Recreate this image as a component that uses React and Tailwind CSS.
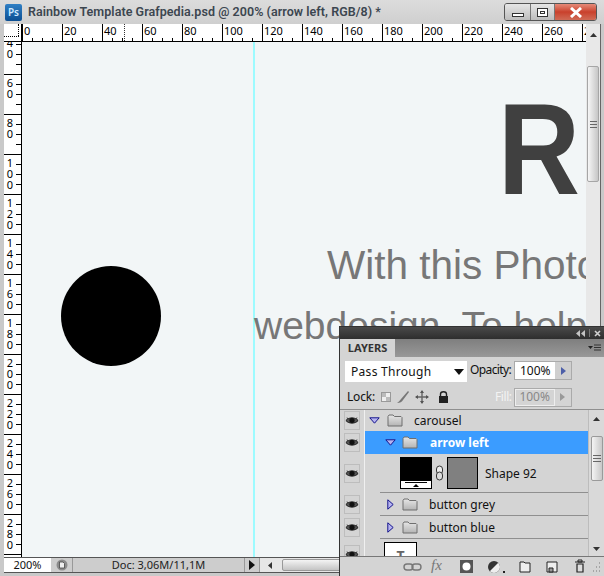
const UI = '"Noto Sans", "DejaVu Sans", sans-serif';

const TOP_MARKS = [0, 20, 40, 60, 80, 100, 120, 140, 160, 180, 200, 220, 240, 260, 280];
const SIDE_MARKS = [40, 60, 80, 100, 120, 140, 160, 180, 200, 220, 240, 260, 280, 300];

function Eye() {
  return (
    <svg width="16" height="11" viewBox="0 0 16 11">
      <path d="M1 5.5C4 1.5 12 1.5 15 5.5C12 9.5 4 9.5 1 5.5Z" fill="#555" stroke="#111" strokeWidth="1" />
      <circle cx="8" cy="5.3" r="3" fill="#111" />
      <path d="M2 2.5L4 3.5M14 2.5L12 3.5" stroke="#222" strokeWidth="1" />
    </svg>
  );
}

function Folder() {
  return (
    <svg width="16" height="13" viewBox="0 0 16 13">
      <defs>
        <linearGradient id="folderFill" x1="0" y1="0" x2="0" y2="1">
          <stop offset="0" stopColor="#e6e6e6" />
          <stop offset="1" stopColor="#b4b4b4" />
        </linearGradient>
      </defs>
      <path d="M1 12V2.5L2 1H6L7.5 2.5H14L15 3.5V12H1Z" fill="url(#folderFill)" stroke="#6f6f6f" strokeWidth="1" />
    </svg>
  );
}

function Twisty({ open }) {
  return open ? (
    <svg width="11" height="7" viewBox="0 0 11 7">
      <path d="M.8.8H10.2L5.5 6.2Z" fill="#b7b4f0" stroke="#14148c" strokeWidth="1" />
    </svg>
  ) : (
    <svg width="7" height="11" viewBox="0 0 7 11">
      <path d="M.8.8V10.2L6.2 5.5Z" fill="#b7b4f0" stroke="#14148c" strokeWidth="1" />
    </svg>
  );
}

function EyeCell({ height }) {
  return (
    <div className="flex w-[25px] shrink-0 items-center justify-center border-r border-[#f0f0f0] bg-[#d4d4d4]" style={{ height }}>
      <div className="flex h-[19px] w-[16px] items-center justify-center border border-[#bdbdbd]">
        <Eye />
      </div>
    </div>
  );
}

function Ruler() {
  return (
    <div className="flex h-[18px] shrink-0 border-b border-black bg-white">
      <div className="relative w-[18px] shrink-0 border-r border-black">
        <div className="absolute left-0 top-[12px] w-[15px] border-t border-dotted border-black" />
        <div className="absolute left-[14px] top-0 h-[12px] border-l border-dotted border-black" />
      </div>
      <div className="relative flex flex-1 overflow-hidden">
        {TOP_MARKS.map((mark) => (
          <div key={mark} className="flex h-full w-[40px] shrink-0 flex-col justify-between border-l border-black">
            <span className="pl-[1px] text-[11px] leading-[13px] text-black">{mark}</span>
            <div className="flex h-[3px] items-end">
              <span className="h-[3px] w-[10px] border-r border-black" />
              <span className="h-[3px] w-[10px] border-r border-black" />
              <span className="h-[3px] w-[10px] border-r border-black" />
            </div>
          </div>
        ))}
        <div className="absolute left-[102px] top-0 h-full border-l border-dotted border-[#333]" />
      </div>
    </div>
  );
}

function SideRuler() {
  return (
    <div className="w-[18px] shrink-0 overflow-hidden border-r border-black bg-white">
      <div className="-mt-[8px]">
        {SIDE_MARKS.map((mark) => (
          <div key={mark} className="flex h-[40px] border-t border-black">
            <div className="flex w-[12px] flex-col items-center pt-[2px] text-[11px] leading-[11px] text-black">
              {String(mark).split('').map((digit, i) => (
                <span key={i}>{digit}</span>
              ))}
            </div>
            <div className="flex w-[5px] flex-col">
              <span className="h-[10px] border-b border-black" />
              <span className="h-[10px] border-b border-black" />
              <span className="h-[10px] border-b border-black" />
            </div>
          </div>
        ))}
      </div>
    </div>
  );
}

function LayerRow({ height, indent, open, name, line = true }) {
  return (
    <div className="flex">
      <EyeCell height={height} />
      <div className="flex flex-1 items-center" style={{ height }}>
        <div className={`flex h-full flex-1 items-center ${line ? 'border-b border-[#8f8f8f]' : ''}`} style={{ marginLeft: indent.line, paddingLeft: indent.pad }}>
          <span className="flex w-[12px] justify-center">
            <Twisty open={open} />
          </span>
          <span className="ml-[6px]">
            <Folder />
          </span>
          <span className="ml-[11px] pt-[2px] text-[12px] text-[#111]">{name}</span>
        </div>
      </div>
    </div>
  );
}

function LayersPanel() {
  return (
    <div
      className="absolute bottom-0 left-[339px] top-[326px] flex w-[265px] flex-col overflow-hidden border-l border-t border-[#333] bg-[#d4d4d4]"
      style={{ fontFamily: UI }}
    >
      <div className="flex h-[12px] shrink-0 items-center justify-end gap-[4px] bg-gradient-to-b from-[#4a4a4a] to-[#2e2e2e] pr-[3px] text-[#bbb]">
        <svg width="9" height="7" viewBox="0 0 9 7">
          <path d="M4 0V7L0 3.5ZM9 0V7L5 3.5Z" fill="#c4c4c4" />
        </svg>
        <span className="h-[8px] border-l border-[#777]" />
        <svg width="7" height="7" viewBox="0 0 7 7">
          <path d="M1 1L6 6M6 1L1 6" stroke="#d0d0d0" strokeWidth="1.6" />
        </svg>
      </div>

      <div className="flex h-[18px] shrink-0 items-center justify-between bg-gradient-to-b from-[#7f7f7f] to-[#989898] pr-[3px]">
        <div className="flex h-full w-[55px] items-center justify-center bg-[#d4d4d4] text-[11px] font-bold text-[#333]">LAYERS</div>
        <svg width="13" height="8" viewBox="0 0 13 8">
          <path d="M0 2H5L2.5 5Z" fill="#222" />
          <path d="M6 1H13M6 3.5H13M6 6H13" stroke="#333" strokeWidth="1" />
        </svg>
      </div>

      <div className="flex h-[28px] shrink-0 items-start pl-[5px] pt-[4px]">
        <div className="flex h-[21px] w-[122px] items-center justify-between bg-white pl-[6px] pr-[3px] text-[12px] tracking-[0.3px] text-[#111]">
          Pass Through
          <svg width="10" height="6" viewBox="0 0 10 6">
            <path d="M0 0H10L5 6Z" fill="#111" />
          </svg>
        </div>
        <span className="ml-[3px] text-[12px] leading-[18px] tracking-[-0.6px] text-[#111]">Opacity:</span>
        <div className="ml-[3px] flex h-[19px] w-[58px] border border-[#aaa]">
          <span className="flex w-[40px] items-center justify-center bg-white text-[12px] text-[#111]">100%</span>
          <span className="flex flex-1 items-center justify-center bg-[#cfcfcf]">
            <svg width="5" height="8" viewBox="0 0 5 8">
              <path d="M0 0L5 4L0 8Z" fill="#4c5ea8" />
            </svg>
          </span>
        </div>
      </div>

      <div className="flex h-[25px] shrink-0 items-center border-b border-[#8f8f8f] pl-[7px]">
        <span className="text-[12px] tracking-[-0.2px] text-[#111]">Lock:</span>
        <svg className="ml-[6px]" width="90" height="14" viewBox="0 0 90 14">
          <rect x=".5" y="2.5" width="9" height="9" fill="#eee" stroke="#999" />
          <path d="M1 3H5V7H1ZM5 7H9V11H5Z" fill="#bbb" />
          <path d="M16 13C18 12 19 10 20 9L27 1L28 2L22 10C21 12 19 13 16 13Z" fill="#777" />
          <path d="M41 1V13M35 7H47" stroke="#666" strokeWidth="1.4" />
          <path d="M41 0L43 3H39ZM41 14L39 11H43ZM34 7L37 5V9ZM48 7L45 5V9Z" fill="#555" />
          <rect x="58" y="6" width="9" height="7" fill="#222" />
          <path d="M59.5 6V4C59.5 1 65.5 1 65.5 4V6" fill="none" stroke="#222" strokeWidth="1.4" />
        </svg>
        <span className="ml-[24px] text-[12px] tracking-[-0.4px] text-[#f3f3f3]">Fill:</span>
        <div className="ml-[2px] flex h-[19px] w-[58px] border border-[#aaa]">
          <span className="flex w-[40px] items-center justify-center border border-[#eee] text-[12px] text-[#888]">100%</span>
          <span className="flex flex-1 items-center justify-center">
            <svg width="5" height="8" viewBox="0 0 5 8">
              <path d="M0 0L5 4L0 8Z" fill="#999" />
            </svg>
          </span>
        </div>
      </div>

      <div className="flex min-h-0 flex-1">
        <div className="min-w-0 flex-1 overflow-hidden">
          <div className="flex">
            <EyeCell height={21} />
            <div className="flex h-[21px] flex-1 items-center pl-[3px]">
              <span className="flex w-[12px] justify-center">
                <Twisty open />
              </span>
              <span className="ml-[7px]">
                <Folder />
              </span>
              <span className="ml-[11px] text-[12px] text-[#111]">carousel</span>
            </div>
          </div>

          <div className="flex">
            <EyeCell height={23} />
            <div className="flex h-[23px] flex-1 items-center bg-[#3b9cff] pl-[19px]">
              <span className="flex w-[12px] justify-center">
                <Twisty open />
              </span>
              <span className="ml-[6px]">
                <Folder />
              </span>
              <span className="ml-[12px] text-[12px] font-bold text-white">arrow left</span>
            </div>
          </div>

          <div className="flex">
            <EyeCell height={39} />
            <div className="flex h-[39px] flex-1 items-center pl-[15px]">
              <div className="flex h-full flex-1 items-center border-b border-[#8f8f8f] pl-[20px]">
                <div className="flex h-[32px] w-[32px] flex-col border border-black bg-black">
                  <div className="flex-1" />
                  <div className="flex h-[7px] flex-col items-center bg-white">
                    <span className="mt-[1px] w-[22px] border-t border-black" />
                    <span className="mt-[1px] h-0 w-0 border-x-[3px] border-b-[3px] border-x-transparent border-b-black" />
                  </div>
                </div>
                <svg className="mx-[3px]" width="9" height="16" viewBox="0 0 9 16">
                  <rect x="1.5" y="1" width="6" height="8" rx="3" fill="#eee" stroke="#333" />
                  <rect x="1.5" y="7" width="6" height="8" rx="3" fill="#ddd" stroke="#333" />
                </svg>
                <div className="h-[32px] w-[31px] border border-black bg-[#808080]" />
                <span className="ml-[7px] pt-[2px] text-[12px] text-[#111]">Shape 92</span>
              </div>
            </div>
          </div>

          <LayerRow height={23} indent={{ line: 15, pad: 4 }} name="button grey" />
          <LayerRow height={23} indent={{ line: 15, pad: 4 }} name="button blue" />

          <div className="flex">
            <EyeCell height={31} />
            <div className="h-[31px] flex-1 pl-[19px] pt-[3px]">
              <div className="flex h-[30px] w-[33px] justify-center border border-black bg-white pt-[6px] text-[14px] font-bold leading-none text-[#666]">T</div>
            </div>
          </div>
        </div>

        <div className="flex w-[16px] shrink-0 flex-col items-center border-l border-[#bcbcbc] bg-[#d9d9d9]">
          <svg className="mt-[7px]" width="7" height="4" viewBox="0 0 7 4">
            <path d="M3.5 0L7 4H0Z" fill="#333" />
          </svg>
          <div className="mt-[15px] flex h-[45px] w-[12px] flex-col items-center justify-center gap-[2px] rounded-[2px] border border-[#9a9a9a] bg-gradient-to-r from-[#f4f4f4] to-[#c8c8c8]">
            <span className="w-[8px] border-t border-[#666]" />
            <span className="w-[8px] border-t border-[#666]" />
            <span className="w-[8px] border-t border-[#666]" />
          </div>
          <svg className="mt-auto mb-[5px]" width="7" height="4" viewBox="0 0 7 4">
            <path d="M0 0H7L3.5 4Z" fill="#333" />
          </svg>
        </div>
      </div>

      <div className="flex h-[20px] shrink-0 items-center border-t border-[#777] bg-[#d4d4d4] pl-[63px]">
        <svg width="200" height="16" viewBox="0 0 200 16">
          <rect x="1" y="5" width="9" height="6" rx="3" fill="none" stroke="#777" strokeWidth="1.4" />
          <rect x="9" y="5" width="9" height="6" rx="3" fill="none" stroke="#777" strokeWidth="1.4" />
          <rect x="57" y="1" width="13" height="13" fill="#555" />
          <circle cx="63.5" cy="7.5" r="4" fill="#fff" />
          <circle cx="91" cy="8" r="6" fill="#333" />
          <path d="M91 2A6 6 0 0 1 91 14Z" fill="#eee" transform="rotate(45 91 8)" />
          <rect x="100" y="12" width="2" height="2" fill="#222" />
          <path d="M117 3H121L122 4H127V13H117Z" fill="#eee" stroke="#222" />
          <path d="M144 3H154V13H144Z" fill="#eee" stroke="#222" />
          <path d="M146 9H150V13H146Z" fill="#999" stroke="#222" />
          <path d="M172 3H182M174 5V13H180V5Z" fill="#ddd" stroke="#222" strokeWidth="1.2" />
          <path d="M175 1H179V3H175Z" fill="none" stroke="#222" />
          <path d="M196 4H197M193 8H194M196 8H197M190 12H191M193 12H194M196 12H197" stroke="#777" />
        </svg>
        <span className="absolute left-[91px] bottom-[2px] text-[15px] italic leading-[18px] text-[#777]" style={{ fontFamily: '"Liberation Serif", serif' }}>
          fx
        </span>
      </div>
    </div>
  );
}

export default function App() {
  return (
    <div className="relative flex h-[576px] w-[604px] flex-col overflow-hidden bg-[#c9c9c9]" style={{ fontFamily: UI }}>
      <div className="flex h-[24px] shrink-0 items-center bg-gradient-to-b from-[#dcdcdc] to-[#cfcfcf] pl-[5px] pr-[7px]">
        <div className="flex h-[17px] w-[17px] items-center justify-center rounded-[2px] bg-gradient-to-b from-[#2f7fc4] to-[#0b4f93] text-[10px] font-semibold leading-none text-[#cfe8ff]">
          Ps
        </div>
        <span className="ml-[6px] text-[12.5px] font-semibold tracking-[0.05px] text-[#3c4650]" style={{ fontFamily: 'Roboto, "Noto Sans", sans-serif' }}>
          Rainbow Template Grafpedia.psd @ 200% (arrow left, RGB/8) *
        </span>
        <div className="ml-auto flex h-[18px] w-[93px] overflow-hidden rounded-[3px] border border-[#555]">
          <div className="flex w-[25px] items-end justify-center bg-gradient-to-b from-[#e6e6e6] to-[#bdbdbd] pb-[3px]">
            <span className="h-[4px] w-[12px] border border-[#333] bg-white" />
          </div>
          <div className="flex w-[25px] items-center justify-center border-x border-[#777] bg-gradient-to-b from-[#e6e6e6] to-[#bdbdbd]">
            <span className="flex h-[9px] w-[11px] items-center justify-center border border-[#333] bg-white">
              <span className="h-[3px] w-[5px] border border-[#333]" />
            </span>
          </div>
          <div className="flex flex-1 items-center justify-center bg-gradient-to-b from-[#e58a78] via-[#c9402c] to-[#cf6a55]">
            <svg width="14" height="11" viewBox="0 0 14 11">
              <path d="M2 1L12 10M12 1L2 10" stroke="#fff" strokeWidth="3" />
            </svg>
          </div>
        </div>
      </div>

      <div className="flex min-h-0 flex-1 pl-[4px] pr-[3px]">
        <div className="flex min-w-0 flex-1 flex-col">
          <Ruler />
          <div className="flex min-h-0 flex-1">
            <SideRuler />
            <div className="relative flex-1 overflow-hidden bg-[#f2f6f7]" style={{ fontFamily: '"Liberation Sans", sans-serif' }}>
              <div className="absolute bottom-0 left-[231px] top-0 w-[2px] bg-[#9dfbff]" />
              <div className="absolute left-[39px] top-[224px] h-[100px] w-[100px] rounded-full bg-black" />
              <span className="absolute left-[476px] top-[36px] origin-left scale-x-[0.88] text-[129px] font-bold leading-[142px] text-[#404040]">R</span>
              <span className="absolute left-[305px] top-[201px] whitespace-nowrap text-[40.5px] leading-[44px] text-[#777]">With this Photoshop</span>
              <span className="absolute left-[232px] top-[262px] whitespace-nowrap text-[39px] leading-[44px] text-[#777]">webdesign. To help</span>
            </div>
          </div>
          <div className="flex h-[16px] shrink-0 items-stretch border-y border-[#555] bg-[#cdcdcd]">
            <span className="flex w-[47px] items-center justify-center bg-white text-[11px] text-[#111]">200%</span>
            <span className="flex w-[22px] items-center justify-center border-r border-[#999]">
              <svg width="12" height="12" viewBox="0 0 12 12">
                <circle cx="6" cy="6" r="5.5" fill="#8c8c8c" />
                <path d="M3.5 3H7L8.5 4.5V9H3.5Z" fill="#eee" stroke="#444" strokeWidth=".8" />
              </svg>
            </span>
            <span className="flex w-[171px] items-center justify-center text-[11px] text-[#222]">Doc: 3,06M/11,1M</span>
            <span className="flex w-[16px] items-center justify-center border-x border-[#999]">
              <svg width="6" height="10" viewBox="0 0 6 10">
                <path d="M0 0L6 5L0 10Z" fill="#111" />
              </svg>
            </span>
            <div className="flex flex-1 items-center bg-[#e6e6e6] pl-[8px]">
              <svg width="4" height="7" viewBox="0 0 4 7">
                <path d="M4 0V7L0 3.5Z" fill="#333" />
              </svg>
              <div className="ml-[10px] flex h-[12px] flex-1 items-center justify-end gap-[2px] rounded-l-[2px] border border-[#999] bg-gradient-to-b from-[#f4f4f4] to-[#c4c4c4] pr-[20px]">
                <span className="h-[8px] border-l border-[#666]" />
                <span className="h-[8px] border-l border-[#666]" />
                <span className="h-[8px] border-l border-[#666]" />
              </div>
            </div>
          </div>
        </div>

        <div className="flex w-[15px] shrink-0 flex-col items-center border-r border-[#666] bg-[#e8e8e8]">
          <svg className="mt-[9px]" width="7" height="4" viewBox="0 0 7 4">
            <path d="M3.5 0L7 4H0Z" fill="#333" />
          </svg>
          <div className="mt-[29px] flex h-[116px] w-[12px] flex-col items-center justify-center gap-[2px] rounded-[2px] border border-[#a6a6a6] bg-gradient-to-r from-[#f6f6f6] to-[#c6c6c6]">
            <span className="w-[7px] border-t border-[#666]" />
            <span className="w-[7px] border-t border-[#666]" />
            <span className="w-[7px] border-t border-[#666]" />
          </div>
        </div>
      </div>
      <div className="h-[3px] shrink-0" />

      <LayersPanel />
    </div>
  );
}
